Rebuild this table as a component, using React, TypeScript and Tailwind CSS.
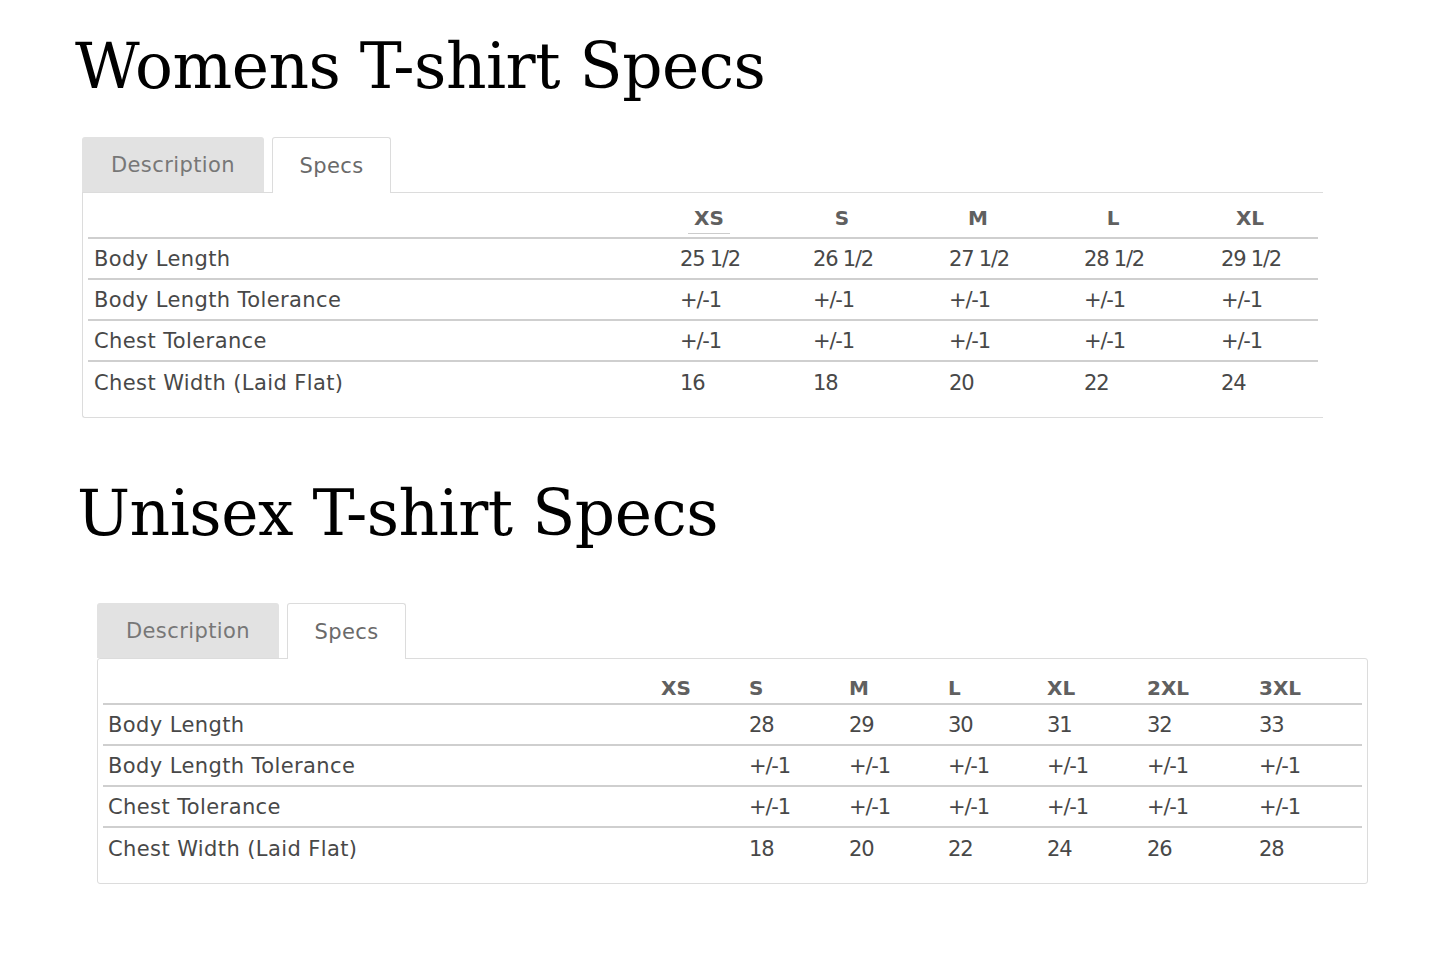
import React from 'react';

type SpecRow = { label: string; values: string[] };

const womensSizes = ['XS', 'S', 'M', 'L', 'XL'];
const womensRows: SpecRow[] = [
  { label: 'Body Length', values: ['25 1/2', '26 1/2', '27 1/2', '28 1/2', '29 1/2'] },
  { label: 'Body Length Tolerance', values: ['+/-1', '+/-1', '+/-1', '+/-1', '+/-1'] },
  { label: 'Chest Tolerance', values: ['+/-1', '+/-1', '+/-1', '+/-1', '+/-1'] },
  { label: 'Chest Width (Laid Flat)', values: ['16', '18', '20', '22', '24'] },
];

const unisexSizes = ['XS', 'S', 'M', 'L', 'XL', '2XL', '3XL'];
const unisexRows: SpecRow[] = [
  { label: 'Body Length', values: ['', '28', '29', '30', '31', '32', '33'] },
  { label: 'Body Length Tolerance', values: ['', '+/-1', '+/-1', '+/-1', '+/-1', '+/-1', '+/-1'] },
  { label: 'Chest Tolerance', values: ['', '+/-1', '+/-1', '+/-1', '+/-1', '+/-1', '+/-1'] },
  { label: 'Chest Width (Laid Flat)', values: ['', '18', '20', '22', '24', '26', '28'] },
];

const bodyFont = "font-['DejaVu_Sans','Inter',sans-serif]";

function Tabs() {
  return (
    <div className={`flex items-end ${bodyFont}`}>
      <div className="w-[182px] h-[55px] pt-[3px] flex items-center justify-center bg-[#e2e2e2] rounded-t-[3px] text-[21px] tracking-[0.4px] text-[#777777]">
        Description
      </div>
      <div className="ml-[8px] w-[119px] h-[56px] pt-[3px] -mb-px relative z-10 flex items-center justify-center bg-white border border-b-0 border-[#dcdcdc] rounded-t-[3px] text-[21px] tracking-[0.4px] text-[#6a6a6a]">
        Specs
      </div>
    </div>
  );
}

function WomensTable() {
  const cols = 'grid grid-cols-[586px_133px_136px_135px_137px_1fr]';
  return (
    <div className={`border-l border-t border-b border-[#dcdcdc] rounded-bl-[3px] px-[5px] pb-[14px] ${bodyFont}`}>
      <div className={`${cols} h-[46px] pt-[9px] items-center border-b-2 border-[#cfcfcf]`}>
        <div />
        {womensSizes.map((size, i) => (
          <div key={size} className="pl-[6px]">
            <div className="w-[58px] flex justify-center">
              <span className={`inline-block text-[20px] leading-[24px] font-semibold text-[#606060] pb-[3px] px-[6px] ${i === 0 ? 'border-b border-[#cccccc]' : 'border-b border-transparent'}`}>{size}</span>
            </div>
          </div>
        ))}
      </div>
      {womensRows.map((row, r) => (
        <div
          key={row.label}
          className={`${cols} h-[41px] pt-[3px] items-center text-[21px] text-[#484848] ${r < womensRows.length - 1 ? 'border-b-2 border-[#cfcfcf]' : ''}`}
        >
          <div className="pl-[6px] tracking-[0.4px]">{row.label}</div>
          {row.values.map((v, i) => (
            <div key={i} className="pl-[6px] tracking-[-1.2px]">{v}</div>
          ))}
        </div>
      ))}
    </div>
  );
}

function UnisexTable() {
  const cols = 'grid grid-cols-[552px_88px_100px_99px_99px_100px_112px_1fr]';
  return (
    <div className={`border border-[#dcdcdc] rounded-[3px] px-[5px] pb-[14px] ${bodyFont}`}>
      <div className={`${cols} h-[46px] pt-[14px] items-center border-b-2 border-[#cfcfcf]`}>
        <div />
        {unisexSizes.map(size => (
          <div key={size} className="pl-[6px] text-[20px] font-semibold text-[#606060]">{size}</div>
        ))}
      </div>
      {unisexRows.map((row, r) => (
        <div
          key={row.label}
          className={`${cols} h-[41px] pt-[3px] items-center text-[21px] text-[#484848] ${r < unisexRows.length - 1 ? 'border-b-2 border-[#cfcfcf]' : ''}`}
        >
          <div className="pl-[5px] tracking-[0.4px]">{row.label}</div>
          {row.values.map((v, i) => (
            <div key={i} className="pl-[6px] tracking-[-1.2px]">{v}</div>
          ))}
        </div>
      ))}
    </div>
  );
}

export default function App() {
  return (
    <div className="w-[1445px] min-h-[967px] bg-white">
      {/* Womens */}
      <h1 className="pt-[35px] pl-[75px] text-[63px] leading-none text-black font-['DejaVu_Serif',serif] tracking-[-0.5px]">
        Womens T-shirt Specs
      </h1>
      <div className="ml-[82px] w-[1241px] mt-[39px]">
        <Tabs />
        <WomensTable />
      </div>

      {/* Unisex */}
      <h1 className="mt-[64px] pl-[77px] text-[63px] leading-none text-black font-['DejaVu_Serif',serif] tracking-[-0.5px]">
        Unisex T-shirt Specs
      </h1>
      <div className="ml-[97px] w-[1271px] mt-[58px]">
        <Tabs />
        <UnisexTable />
      </div>
    </div>
  );
}
